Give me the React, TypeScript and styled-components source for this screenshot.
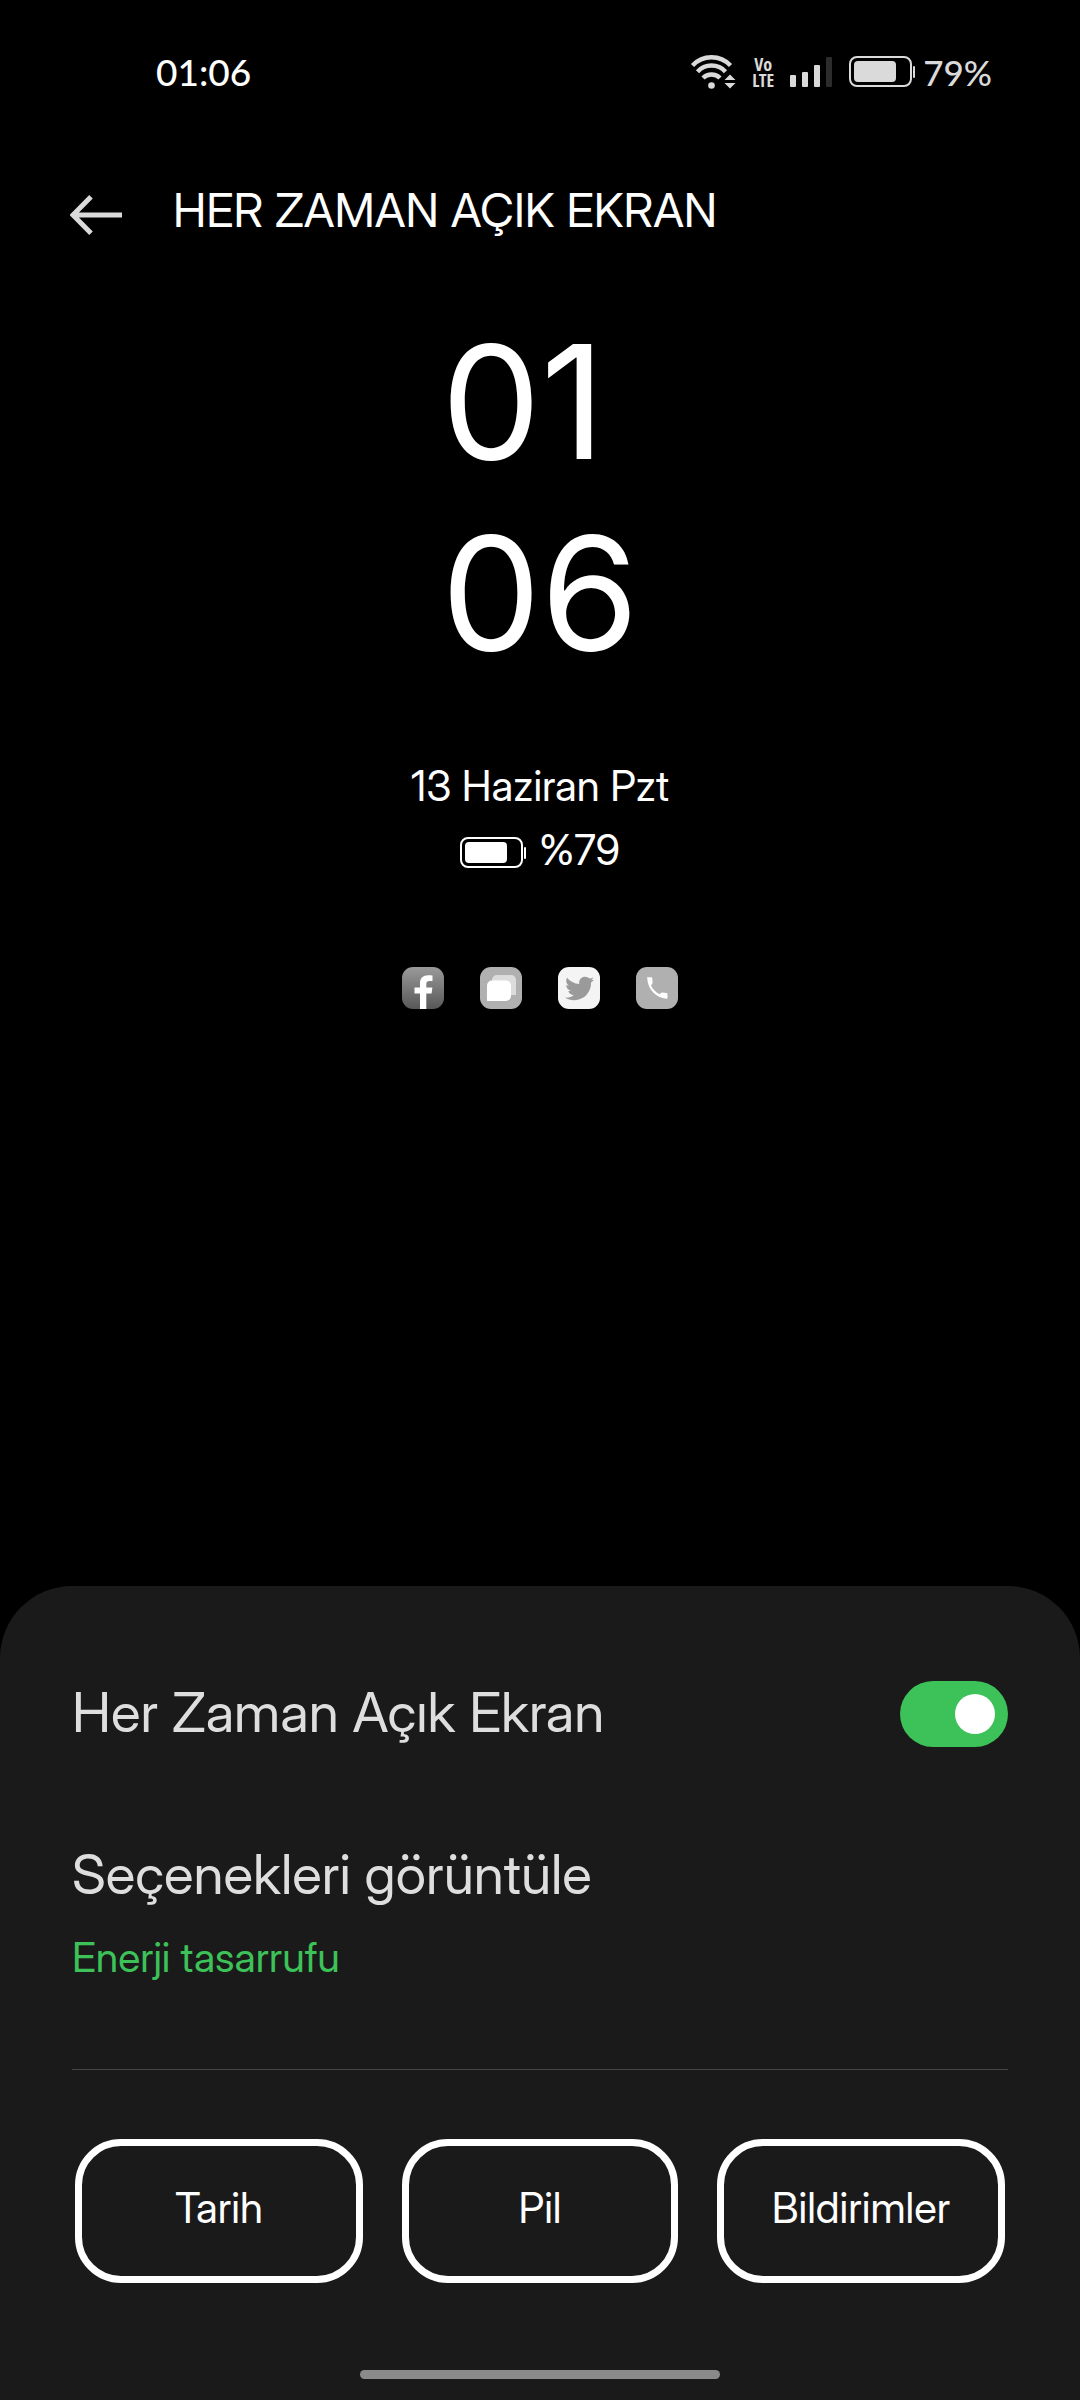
import React, { useState } from "react";
import styled, { createGlobalStyle } from "styled-components";
import { FaTwitter } from "react-icons/fa";

const GlobalStyle = createGlobalStyle`
  * { box-sizing: border-box; }
  body { margin: 0; background: #000; }
  button, input { font: inherit; color: inherit; }
`;

const Screen = styled.div`
  display: flex;
  flex-direction: column;
  min-height: 100vh;
  background: #000;
  color: #fff;
  font-family: "Inter Display", Inter, "Liberation Sans", sans-serif;
`;

const StatusBar = styled.div`
  display: flex;
  align-items: center;
  justify-content: space-between;
  height: 144px;
  padding: 0 88px 0 156px;
  font-family: Lato, "Liberation Sans", sans-serif;
  font-size: 37px;
  font-weight: 500;
  line-height: 48px;
`;

const StatusIcons = styled.div`
  display: flex;
  align-items: center;
  color: #dadada;
  font-size: 35px;
`;

const VoLte = styled.span`
  width: 24px;
  margin: 0 15px;
  font-family: "Open Sans Condensed", "Roboto Condensed", "DejaVu Sans Condensed", "Liberation Sans", sans-serif;
  font-size: 18px;
  font-stretch: condensed;
  font-weight: 700;
  line-height: 16px;
  text-align: center;
`;

const StatusBattery = styled.span`
  display: flex;
  margin: 0 6px 0 16px;
`;

const Header = styled.header`
  display: flex;
  align-items: center;
  gap: 51px;
  height: 142px;
  padding: 0 70px;
`;

const BackButton = styled.button`
  display: flex;
  padding: 0;
  border: 0;
  background: none;
`;

const Title = styled.h1`
  margin: 0;
  padding-bottom: 10px;
  font-size: 47px;
  font-weight: 400;
  line-height: 64px;
`;

const Preview = styled.main`
  display: flex;
  flex: 1;
  flex-direction: column;
  align-items: center;
  padding-top: 20px;
`;

const Clock = styled.div`
  display: flex;
  flex-direction: column;
  margin-bottom: 66px;
  font-family: Inter, "Liberation Sans", sans-serif;
  font-size: 158px;
  line-height: 191px;
`;

const InfoLine = styled.div`
  display: flex;
  align-items: center;
  gap: 11px;
  font-size: 42px;
  line-height: 64px;
`;

const InfoBattery = styled.span`
  display: flex;
  padding-top: 6px;
`;

const AppIcons = styled.div`
  display: flex;
  gap: 36px;
  margin-top: 85px;
`;

const AppIcon = styled.span<{ $fill: string; $color: string }>`
  display: flex;
  align-items: center;
  justify-content: center;
  width: 42px;
  height: 42px;
  overflow: hidden;
  border-radius: 11px;
  background: ${(p) => p.$fill};
  color: ${(p) => p.$color};
`;

const Sheet = styled.section`
  display: flex;
  flex-direction: column;
  padding: 95px 72px 21px;
  border-radius: 72px 72px 0 0;
  background: #1a1a1a;
`;

const SettingRow = styled.label`
  display: flex;
  align-items: center;
  justify-content: space-between;
`;

const SettingName = styled.span`
  padding-bottom: 4px;
  color: #dedede;
  font-size: 55px;
  line-height: 62px;
`;

const Switch = styled.input`
  display: flex;
  align-items: center;
  width: 108px;
  height: 66px;
  margin: 0;
  padding: 0 13px;
  appearance: none;
  border-radius: 33px;
  background: #5a5a5a;

  &::before {
    content: "";
    width: 40px;
    height: 40px;
    border-radius: 50%;
    background: #fff;
  }

  &:checked {
    justify-content: flex-end;
    background: #3dc159;
  }
`;

const OptionButton = styled.button`
  display: flex;
  flex-direction: column;
  align-items: flex-start;
  gap: 24px;
  margin-top: 96px;
  padding: 0 0 88px;
  border: 0;
  border-bottom: 1px solid #464646;
  background: none;
  text-align: left;
`;

const OptionValue = styled.span`
  color: #3dc159;
  font-size: 41px;
  line-height: 48px;
`;

const Toggles = styled.div`
  display: grid;
  grid-template-columns: 288fr 276fr 288fr;
  gap: 39px;
  margin: 69px 3px 87px;
`;

const ToggleButton = styled.button`
  height: 144px;
  padding: 0 0 6px;
  border: 7px solid #fff;
  border-radius: 46px;
  background: none;
  font-size: 42px;
  line-height: 48px;
`;

const HomeBar = styled.div`
  align-self: center;
  width: 360px;
  height: 9px;
  border-radius: 5px;
  background: #8a8a8a;
`;

function Battery() {
  return (
    <svg width="68" height="32" viewBox="0 0 68 32" aria-hidden="true">
      <rect x="1" y="1" width="61" height="29" rx="7" fill="none" stroke="currentColor" strokeWidth="2" />
      <rect x="5" y="5" width="42" height="21" rx="4" fill="currentColor" />
      <rect x="64" y="10" width="2" height="12" rx="1" fill="currentColor" />
    </svg>
  );
}

function Wifi() {
  return (
    <svg width="46" height="36" viewBox="0 0 46 36" aria-hidden="true">
      <g fill="none" stroke="currentColor" strokeWidth="4.4">
        <path d="M2.5 11.5A26 26 0 0 1 40.5 11.5" />
        <path d="M7.5 17.7A19 19 0 0 1 35.5 17.7" />
        <path d="M13 24A12 12 0 0 1 30 24" />
      </g>
      <path d="M34 25.5 40 18.5 46 25.5V29L40 36 34 29Z" fill="#000" />
      <circle cx="21.5" cy="31.5" r="3.3" fill="currentColor" />
      <path d="M34.5 26 40 20.5 45.5 26ZM34.5 29H45.5L40 34.5Z" fill="currentColor" />
    </svg>
  );
}

function Signal() {
  return (
    <svg width="43" height="30" viewBox="0 0 43 30" fill="currentColor" aria-hidden="true">
      <rect x="0" y="18" width="6" height="12" rx="1" />
      <rect x="12" y="15" width="6" height="15" rx="1" />
      <rect x="24" y="8" width="6" height="22" rx="1" />
      <rect x="36" y="0" width="6" height="30" rx="1" fill="#2c2c2c" />
    </svg>
  );
}

function App() {
  const [enabled, setEnabled] = useState(true);

  return (
    <Screen>
      <GlobalStyle />
      <StatusBar>
        <span>01:06</span>
        <StatusIcons>
          <Wifi />
          <VoLte>
            Vo
            <br />
            LTE
          </VoLte>
          <Signal />
          <StatusBattery>
            <Battery />
          </StatusBattery>
          <span>79%</span>
        </StatusIcons>
      </StatusBar>

      <Header>
        <BackButton type="button" aria-label="Geri">
          <svg width="52" height="40" viewBox="0 0 52 40" fill="none" stroke="#dadada" strokeWidth="5" aria-hidden="true">
            <path d="M52 20H3.5M21 1.8 3 20 21 38.2" />
          </svg>
        </BackButton>
        <Title>HER ZAMAN AÇIK EKRAN</Title>
      </Header>

      <Preview>
        <Clock>
          <span>01</span>
          <span>06</span>
        </Clock>
        <InfoLine>13 Haziran Pzt</InfoLine>
        <InfoLine>
          <InfoBattery>
            <Battery />
          </InfoBattery>
          <span>%79</span>
        </InfoLine>
        <AppIcons>
          <AppIcon $fill="linear-gradient(#9a9a9a, #585858)" $color="#fff">
            <svg width="42" height="42" viewBox="0 0 42 42" fill="currentColor" aria-hidden="true">
              <path d="M18 42V26.5H12.5V20.5H18V16.5C18 11 21.2 8.3 26 8.3C28.3 8.3 30 8.5 30.5 8.6V14H27.5C25 14 24.3 15.2 24.3 17V20.5H30.4L29.6 26.5H24.3V42Z" />
            </svg>
          </AppIcon>
          <AppIcon $fill="#b0b0b0" $color="#fff">
            <svg width="42" height="42" viewBox="0 0 42 42" aria-hidden="true">
              <path d="M17 8H31A5 5 0 0 1 36 13V28H17A5 5 0 0 1 12 23V13A5 5 0 0 1 17 8Z" fill="#dcdcdc" />
              <path d="M12 13.5H26A5 5 0 0 1 31 18.5V29A5 5 0 0 1 26 34H7V18.5A5 5 0 0 1 12 13.5Z" fill="#fff" />
            </svg>
          </AppIcon>
          <AppIcon $fill="#f4f4f4" $color="#9a9a9a">
            <FaTwitter size={29} />
          </AppIcon>
          <AppIcon $fill="#b0b0b0" $color="#fff">
            <svg width="42" height="42" viewBox="0 0 42 42" fill="currentColor" aria-hidden="true">
              <path d="M11.2 11Q10.5 10.3 11.5 10.3H15.2Q16.2 10.3 16.3 11.3L16.6 15.6Q16.6 16.5 15.9 17.3L14.9 18.4C17 22.3 19.6 25 23.4 27.2L24.7 26Q25.4 25.3 26.3 25.4L30.4 25.9Q31.5 26 31.5 27V30.8Q31.5 31.8 30.5 31.7C20 31 11.5 22 11.2 11Z" />
            </svg>
          </AppIcon>
        </AppIcons>
      </Preview>

      <Sheet>
        <SettingRow>
          <SettingName>Her Zaman Açık Ekran</SettingName>
          <Switch
            type="checkbox"
            role="switch"
            checked={enabled}
            onChange={(e) => setEnabled(e.target.checked)}
          />
        </SettingRow>
        <OptionButton type="button">
          <SettingName>Seçenekleri görüntüle</SettingName>
          <OptionValue>Enerji tasarrufu</OptionValue>
        </OptionButton>
        <Toggles>
          <ToggleButton type="button">Tarih</ToggleButton>
          <ToggleButton type="button">Pil</ToggleButton>
          <ToggleButton type="button">Bildirimler</ToggleButton>
        </Toggles>
        <HomeBar />
      </Sheet>
    </Screen>
  );
}

export default App;
